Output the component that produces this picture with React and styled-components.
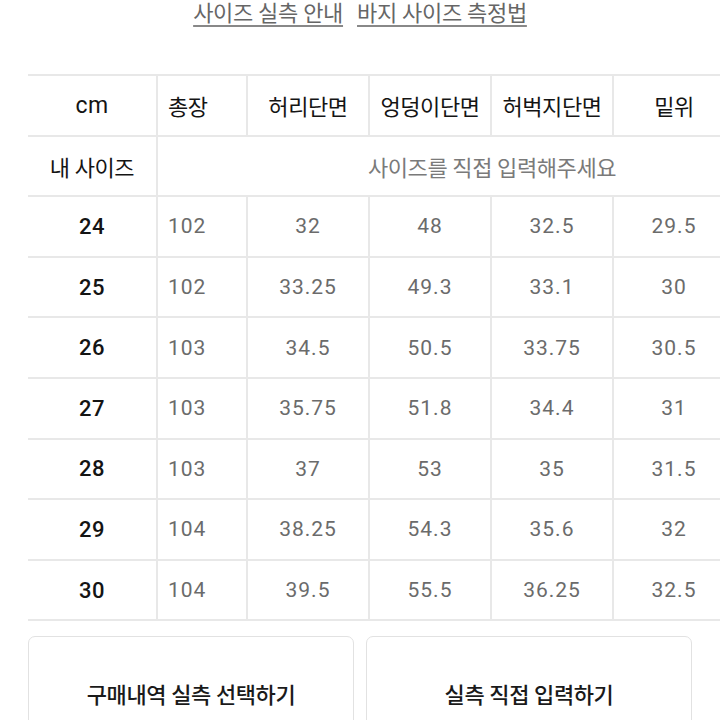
import React from 'react'
import styled, { createGlobalStyle } from 'styled-components'

const GlobalStyle = createGlobalStyle`
  html, body {
    margin: 0;
    padding: 0;
    background: #ffffff;
    overflow: hidden;
  }
  body {
    font-family: Roboto, "Noto Sans CJK KR", sans-serif;
  }
`

const LINE = '#e8e8e8'

const Page = styled.div`
  width: 720px;
  height: 720px;
  overflow: hidden;
  display: flex;
  flex-direction: column;
  & > * {
    flex-shrink: 0;
  }
`

const LinkBar = styled.div`
  display: flex;
  justify-content: center;
  gap: 14px;
  height: 74px;
  box-sizing: border-box;
`

const GuideLink = styled.a`
  font-size: 22px;
  line-height: 28px;
  color: #666666;
  text-decoration: underline;
  text-decoration-color: #888888;
  text-underline-offset: 4px;
  text-decoration-thickness: 1.5px;
  letter-spacing: -0.3px;
  cursor: pointer;
`

const Table = styled.div`
  display: grid;
  grid-template-columns: 130px 90px 122px 122px 122px 122px;
  grid-auto-rows: 60.6px;
  margin-left: 28px;
  width: 708px;
  border-top: 2px solid ${LINE};
`

const Cell = styled.div`
  display: flex;
  align-items: center;
  justify-content: ${p => (p.left ? 'flex-start' : 'center')};
  padding-left: ${p => (p.left ? '10px' : '0')};
  border-bottom: 2px solid ${LINE};
  border-right: 2px solid ${LINE};
  box-sizing: border-box;
  font-size: ${p => (p.head ? '22px' : '21px')};
  letter-spacing: ${p => (p.head ? '-0.4px' : '1px')};
  color: ${p => (p.head ? '#141414' : '#6b6b6b')};
  white-space: nowrap;
`

const UnitCell = styled(Cell)`
  font-size: 23px;
  letter-spacing: 0.3px;
`

const SizeCell = styled(Cell)`
  color: #141414;
  font-size: 22px;
  font-weight: 500;
  letter-spacing: 0.4px;
`

const PromptCell = styled(Cell)`
  grid-column: 2 / span 5;
  padding-left: 92px;
  color: #7a7a7a;
  font-size: 22px;
  letter-spacing: -0.4px;
`

const ButtonRow = styled.div`
  display: flex;
  gap: 12px;
  margin: 15px 0 0 28px;
`

const ActionButton = styled.button`
  width: ${p => p.w}px;
  height: 114px;
  background: #ffffff;
  border: 1.5px solid #e2e2e2;
  border-radius: 7px;
  font-family: Roboto, "Noto Sans CJK KR", sans-serif;
  font-size: 22px;
  font-weight: 500;
  letter-spacing: -0.4px;
  color: #1a1a1a;
  box-sizing: border-box;
  cursor: pointer;
`

const headers = ['허리단면', '엉덩이단면', '허벅지단면', '밑위']

const rows = [
  ['24', '102', '32', '48', '32.5', '29.5'],
  ['25', '102', '33.25', '49.3', '33.1', '30'],
  ['26', '103', '34.5', '50.5', '33.75', '30.5'],
  ['27', '103', '35.75', '51.8', '34.4', '31'],
  ['28', '103', '37', '53', '35', '31.5'],
  ['29', '104', '38.25', '54.3', '35.6', '32'],
  ['30', '104', '39.5', '55.5', '36.25', '32.5'],
]

export default function App() {
  return (
    <Page>
      <GlobalStyle />
      <LinkBar>
        <GuideLink>사이즈 실측 안내</GuideLink>
        <GuideLink>바지 사이즈 측정법</GuideLink>
      </LinkBar>
      <Table>
        <UnitCell head>cm</UnitCell>
        <Cell head left>총장</Cell>
        {headers.map(h => (
          <Cell head key={h}>{h}</Cell>
        ))}
        <Cell head>내 사이즈</Cell>
        <PromptCell>사이즈를 직접 입력해주세요</PromptCell>
        {rows.map(r => (
          <React.Fragment key={r[0]}>
            <SizeCell>{r[0]}</SizeCell>
            <Cell left>{r[1]}</Cell>
            {r.slice(2).map((v, i) => (
              <Cell key={i}>{v}</Cell>
            ))}
          </React.Fragment>
        ))}
      </Table>
      <ButtonRow>
        <ActionButton w={326}>구매내역 실측 선택하기</ActionButton>
        <ActionButton w={326}>실측 직접 입력하기</ActionButton>
      </ButtonRow>
    </Page>
  )
}
